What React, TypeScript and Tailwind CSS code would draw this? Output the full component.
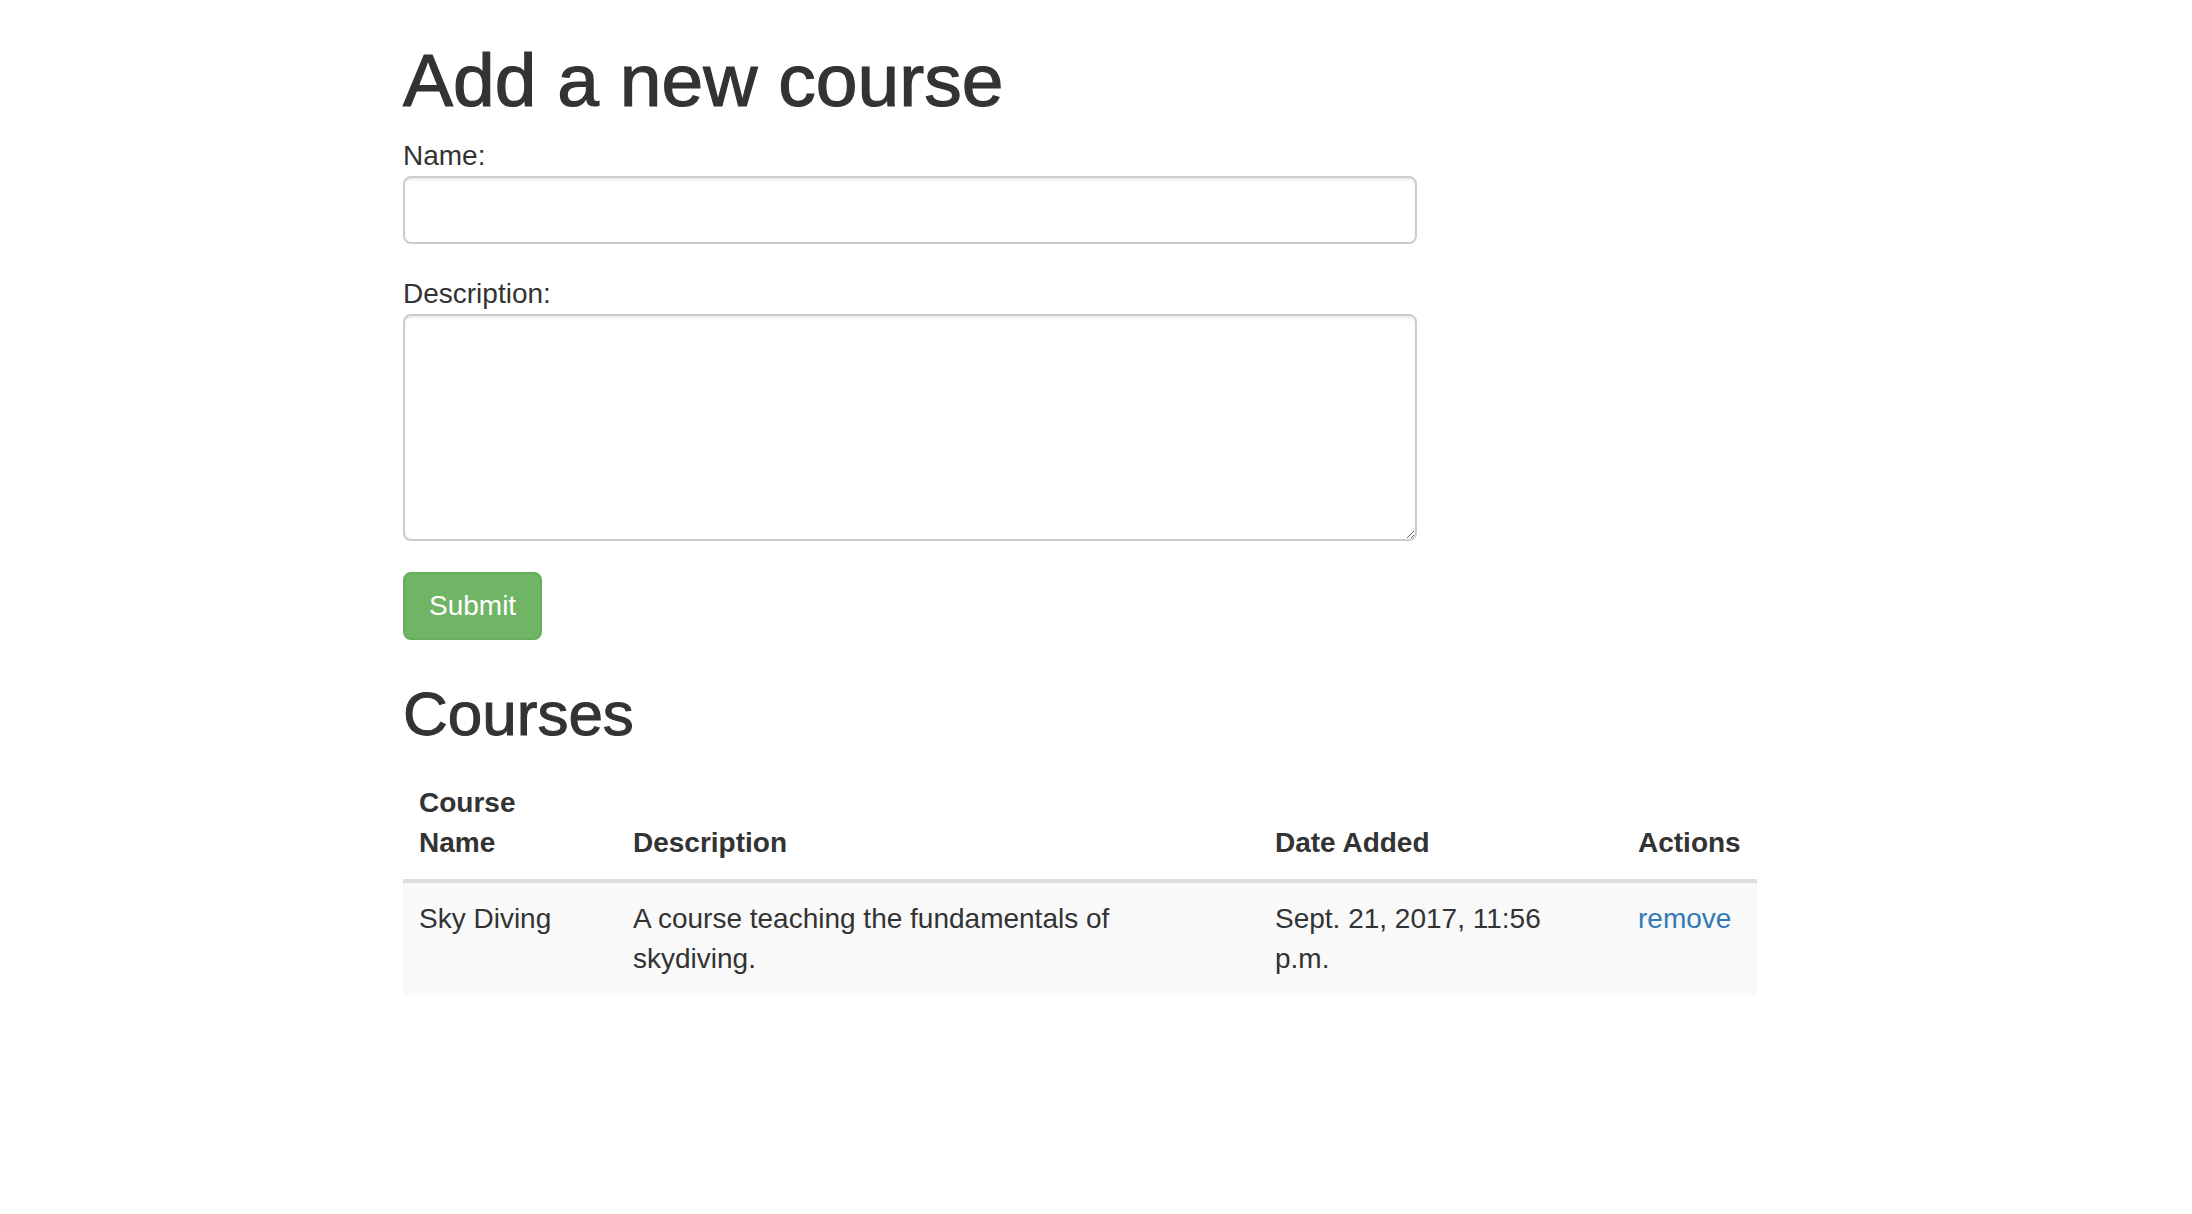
import React from "react";

const font = { fontFamily: '"Liberation Sans", Arial, Helvetica, sans-serif' };

type Course = {
    name: string;
    description: string;
    added: string;
};

const courses: Course[] = [
    {
        name: "Sky Diving",
        description: "A course teaching the fundamentals of skydiving.",
        added: "Sept. 21, 2017, 11:56 p.m.",
    },
];

export default function App() {
    return (
        <div className="min-h-screen bg-white text-[#333333]" style={font}>
            <div className="ml-[403px] w-[1354px] pb-20">
                {/* New course form */}
                <h1 className="mt-[40px] text-[75px] leading-[80px] font-medium [-webkit-text-stroke:1.2px_#333333]">Add a new course</h1>

                <form onSubmit={(e) => e.preventDefault()}>
                    <div className="mt-[16px] mb-[30px] w-[1014px]">
                        <label htmlFor="name" className="block text-[28px] leading-[40px]">Name:</label>
                        <input
                            id="name"
                            type="text"
                            className="block w-full h-[68px] px-6 text-[28px] rounded-lg border-2 border-[#cccccc] bg-white shadow-[inset_0_2px_2px_rgba(0,0,0,0.075)] outline-none"
                        />
                    </div>

                    <div className="mb-[31px] w-[1014px]">
                        <label htmlFor="description" className="block text-[28px] leading-[40px]">Description:</label>
                        <textarea
                            id="description"
                            className="block w-full h-[227px] px-6 py-3 text-[28px] rounded-lg border-2 border-[#cccccc] bg-white shadow-[inset_0_2px_2px_rgba(0,0,0,0.075)] outline-none"
                        />
                    </div>

                    <button
                        type="submit"
                        className="block h-[68px] px-6 text-[28px] leading-[40px] text-white rounded-lg border-2 border-[#66ad5c] bg-[#70b466]"
                    >
                        Submit
                    </button>
                </form>

                {/* Course list */}
                <h2 className="mt-[40px] text-[62px] leading-[68px] font-medium [-webkit-text-stroke:1px_#333333]">Courses</h2>

                <table className="mt-[19px] w-[1354px] table-fixed border-collapse text-[28px] leading-[40px]">
                    <thead>
                        <tr className="border-b-4 border-[#dddddd]">
                            <th className="w-[214px] pl-4 pr-5 py-4 text-left align-bottom font-bold">Course Name</th>
                            <th className="w-[642px] px-4 py-4 text-left align-bottom font-bold">Description</th>
                            <th className="w-[363px] px-4 py-4 text-left align-bottom font-bold">Date Added</th>
                            <th className="w-[135px] px-4 py-4 text-left align-bottom font-bold">Actions</th>
                        </tr>
                    </thead>
                    <tbody>
                        {courses.map((c) => (
                            <tr key={c.name} className="bg-[#f9f9f9]">
                                <td className="pl-4 pr-5 py-4 align-top">{c.name}</td>
                                <td className="pl-4 pr-[40px] py-4 align-top">{c.description}</td>
                                <td className="pl-4 pr-5 py-4 align-top">{c.added}</td>
                                <td className="px-4 py-4 align-top">
                                    <a href="#" className="text-[#337ab7] hover:underline">remove</a>
                                </td>
                            </tr>
                        ))}
                    </tbody>
                </table>
            </div>
        </div>
    );
}
